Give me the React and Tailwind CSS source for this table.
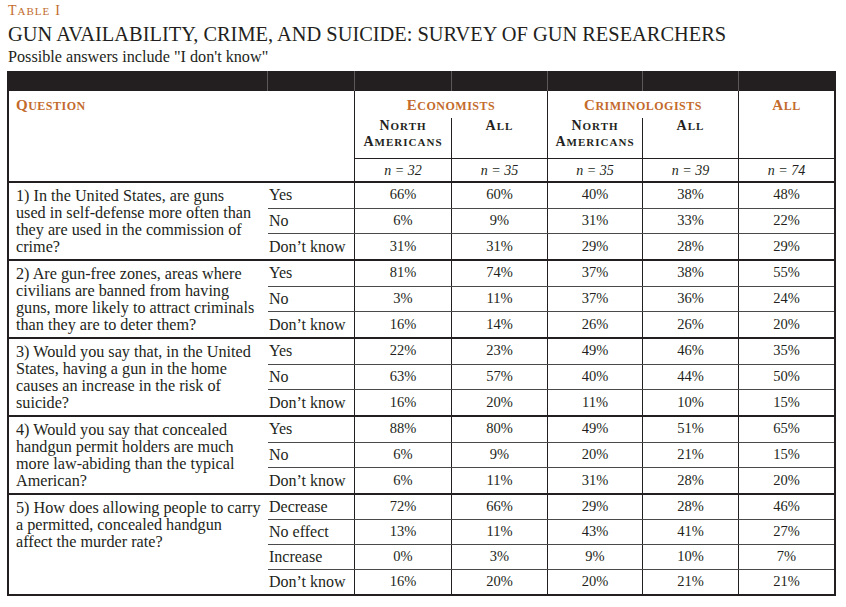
import React from "react";

const INK = "text-[#231f20]";

function SC({ text, big, small, className = "" }) {
  const words = text.split(" ");
  return (
    <span className={className}>
      {words.map((w, i) => (
        <React.Fragment key={i}>
          {i > 0 ? " " : null}
          <span className={big}>{w[0].toUpperCase()}</span>
          <span className={small}>{w.slice(1).toUpperCase()}</span>
        </React.Fragment>
      ))}
    </span>
  );
}

const groups = [
  {
    q: ["1) In the United States, are guns", "used in self-defense more often than", "they are used in the commission of", "crime?"],
    rows: [
      ["Yes", "66%", "60%", "40%", "38%", "48%"],
      ["No", "6%", "9%", "31%", "33%", "22%"],
      ["Don’t know", "31%", "31%", "29%", "28%", "29%"],
    ],
  },
  {
    q: ["2) Are gun-free zones, areas where", "civilians are banned from having", "guns, more likely to attract criminals", "than they are to deter them?"],
    rows: [
      ["Yes", "81%", "74%", "37%", "38%", "55%"],
      ["No", "3%", "11%", "37%", "36%", "24%"],
      ["Don’t know", "16%", "14%", "26%", "26%", "20%"],
    ],
  },
  {
    q: ["3) Would you say that, in the United", "States, having a gun in the home", "causes an increase in the risk of", "suicide?"],
    rows: [
      ["Yes", "22%", "23%", "49%", "46%", "35%"],
      ["No", "63%", "57%", "40%", "44%", "50%"],
      ["Don’t know", "16%", "20%", "11%", "10%", "15%"],
    ],
  },
  {
    q: ["4) Would you say that concealed", "handgun permit holders are much", "more law-abiding than the typical", "American?"],
    rows: [
      ["Yes", "88%", "80%", "49%", "51%", "65%"],
      ["No", "6%", "9%", "20%", "21%", "15%"],
      ["Don’t know", "6%", "11%", "31%", "28%", "20%"],
    ],
  },
  {
    q: ["5) How does allowing people to carry", "a permitted, concealed handgun", "affect the murder rate?"],
    rows: [
      ["Decrease", "72%", "66%", "29%", "28%", "46%"],
      ["No effect", "13%", "11%", "43%", "41%", "27%"],
      ["Increase", "0%", "3%", "9%", "10%", "7%"],
      ["Don’t know", "16%", "20%", "20%", "21%", "21%"],
    ],
  },
];

const dataW = ["w-[97px] border-r", "w-[96px] border-r", "w-[95px] border-r", "w-[96px] border-r", "w-[95px]"];

function Group({ g, last }) {
  return (
    <div className={`flex ${last ? "h-[99px]" : "h-[78px] border-b-2"} border-[#231f20]`}>
      <div className="w-[259px] shrink-0 pl-[7px] pt-[5px] text-[16.2px] leading-[17px] whitespace-nowrap">
        {g.q.map((l, i) => (
          <div key={i}>{l}</div>
        ))}
      </div>
      <div className="flex-1 flex flex-col">
        {g.rows.map((r, i) => (
          <div
            key={i}
            className={`flex-1 flex ${i < g.rows.length - 1 ? "border-b border-[#4a4a4a]" : ""}`}
          >
            <div className="w-[87px] shrink-0 border-r border-[#231f20] flex items-center pl-px text-[16px] whitespace-nowrap">
              {r[0]}
            </div>
            {r.slice(1).map((v, j) => (
              <div
                key={j}
                className={`${dataW[j]} shrink-0 border-[#231f20] flex items-center justify-center text-[14.5px]`}
              >
                {v}
              </div>
            ))}
          </div>
        ))}
      </div>
    </div>
  );
}

const orangeBig = "text-[15px]";
const orangeSmall = "text-[12px]";
const blackBig = "text-[14px]";
const blackSmall = "text-[11px]";

export default function App() {
  return (
    <div className={`w-[846px] h-[607px] bg-white overflow-hidden font-['Liberation_Serif',serif] ${INK}`}>
      <div className="pl-[8px] pt-[2px] leading-[16px] text-[#c36b2c] tracking-[1px]">
        <SC text="Table i" big="text-[14px]" small="text-[11px]" />
      </div>
      <div className="pl-[8px] mt-[3px] text-[20.4px] leading-[24px] whitespace-nowrap">
        GUN AVAILABILITY, CRIME, AND SUICIDE: SURVEY OF GUN RESEARCHERS
      </div>
      <div className="pl-[8px] mt-[1px] text-[16.2px] leading-[20px] whitespace-nowrap">
        Possible answers include "I don't know"
      </div>
      <div className="mt-[4px] ml-[7px] w-[829px] border-x-2 border-b-2 border-[#231f20]">
        <div className="h-[20px] bg-[#231f20] flex">
          <div className="w-[259px] border-r border-[#5c5859]" />
          <div className="w-[87px] border-r border-[#5c5859]" />
          <div className="w-[97px] border-r border-[#5c5859]" />
          <div className="w-[96px] border-r border-[#5c5859]" />
          <div className="w-[95px] border-r border-[#5c5859]" />
          <div className="w-[96px] border-r border-[#5c5859]" />
          <div className="flex-1" />
        </div>
        <div className="h-[92px] border-b-2 border-[#231f20] flex">
          <div className="w-[346px] border-r border-[#231f20]">
            <div className="h-[27px] pt-[2px] pl-[7px] flex items-center font-bold text-[#c36b2c] tracking-[0.5px] text-[15px]">
              <SC text="Question" big={orangeBig} small={orangeSmall} />
            </div>
          </div>
          <div className="w-[193px] border-r border-[#231f20] flex flex-col">
            <div className="h-[27px] pt-[2px] flex items-center justify-center font-bold text-[#c36b2c] tracking-[0.5px] text-[15px]">
              <SC text="Economists" big={orangeBig} small={orangeSmall} />
            </div>
            <div className="h-[40px] flex">
              <div className="w-[97px] border-r border-[#231f20] text-center font-bold tracking-[1px] text-[14px] leading-[16px]">
                <SC text="North" big={blackBig} small={blackSmall} />
                <br />
                <SC text="Americans" big={blackBig} small={blackSmall} />
              </div>
              <div className="flex-1 text-center font-bold tracking-[1px] text-[14px] leading-[16px]">
                <SC text="All" big={blackBig} small={blackSmall} />
              </div>
            </div>
            <div className="h-[23px] border-t border-[#231f20] flex italic text-[14px]">
              <div className="w-[97px] border-r border-[#231f20] flex items-center justify-center">n = 32</div>
              <div className="flex-1 flex items-center justify-center">n = 35</div>
            </div>
          </div>
          <div className="w-[191px] border-r border-[#231f20] flex flex-col">
            <div className="h-[27px] pt-[2px] flex items-center justify-center font-bold text-[#c36b2c] tracking-[0.5px] text-[15px]">
              <SC text="Criminologists" big={orangeBig} small={orangeSmall} />
            </div>
            <div className="h-[40px] flex">
              <div className="w-[95px] border-r border-[#231f20] text-center font-bold tracking-[1px] text-[14px] leading-[16px]">
                <SC text="North" big={blackBig} small={blackSmall} />
                <br />
                <SC text="Americans" big={blackBig} small={blackSmall} />
              </div>
              <div className="flex-1 text-center font-bold tracking-[1px] text-[14px] leading-[16px]">
                <SC text="All" big={blackBig} small={blackSmall} />
              </div>
            </div>
            <div className="h-[23px] border-t border-[#231f20] flex italic text-[14px]">
              <div className="w-[95px] border-r border-[#231f20] flex items-center justify-center">n = 35</div>
              <div className="flex-1 flex items-center justify-center">n = 39</div>
            </div>
          </div>
          <div className="flex-1 flex flex-col">
            <div className="h-[27px] pt-[2px] flex items-center justify-center font-bold text-[#c36b2c] tracking-[0.5px] text-[15px]">
              <SC text="All" big={orangeBig} small={orangeSmall} />
            </div>
            <div className="h-[40px]" />
            <div className="h-[23px] border-t border-[#231f20] flex items-center justify-center italic text-[14px]">
              n = 74
            </div>
          </div>
        </div>
        {groups.map((g, i) => (
          <Group key={i} g={g} last={i === groups.length - 1} />
        ))}
      </div>
    </div>
  );
}
